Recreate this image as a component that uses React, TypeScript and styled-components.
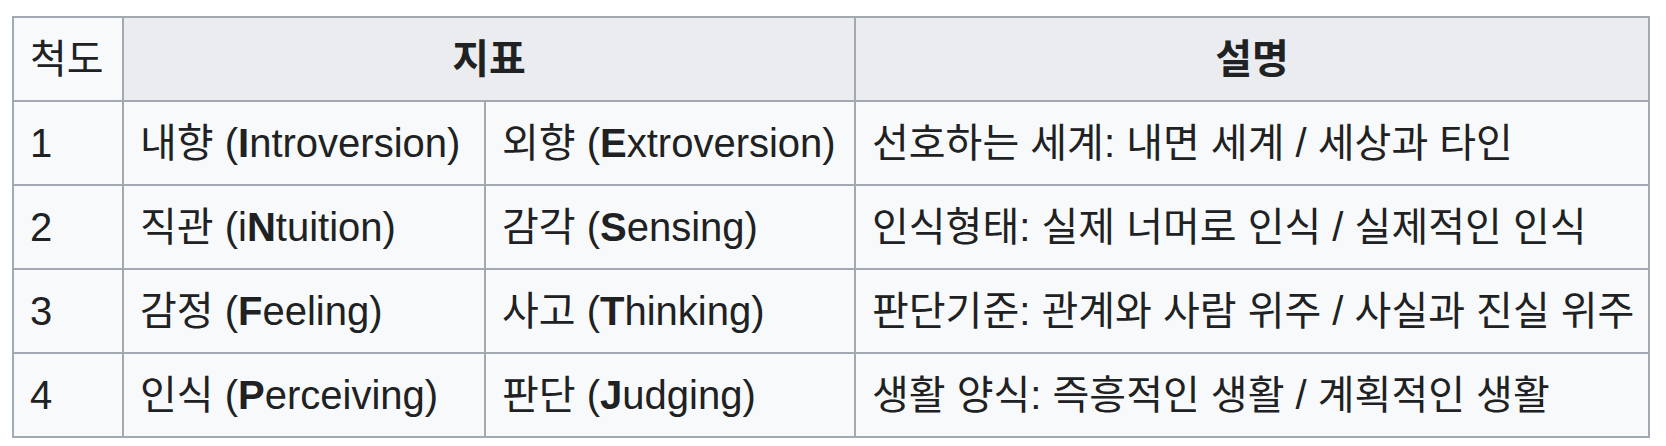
import React from "react";
import styled, { createGlobalStyle } from "styled-components";

const GlobalStyle = createGlobalStyle`
  html, body {
    margin: 0;
    padding: 0;
    background: #ffffff;
  }
  body {
    font-family: "Liberation Sans", "Noto Sans CJK KR", sans-serif;
    color: #202122;
  }
`;

const Page = styled.div`
  padding: 16px 12px;
`;

const Grid = styled.div`
  display: grid;
  grid-template-columns: 110px 362px 370px 794px;
  grid-auto-rows: 84px;
  width: max-content;
  border-left: 2px solid #a2a9b1;
  border-top: 2px solid #a2a9b1;
  font-size: 40px;
  line-height: 1.6;
`;

const Cell = styled.div<{ $head?: boolean; $span?: number }>`
  box-sizing: border-box;
  display: flex;
  align-items: center;
  justify-content: ${(p) => (p.$head ? "center" : "flex-start")};
  padding: 0 16px;
  border-right: 2px solid #a2a9b1;
  border-bottom: 2px solid #a2a9b1;
  background: ${(p) => (p.$head ? "#eaecf0" : "#f8f9fa")};
  font-weight: ${(p) => (p.$head ? 700 : 400)};
  grid-column: ${(p) => (p.$span ? `span ${p.$span}` : "auto")};
  white-space: nowrap;
  overflow: hidden;
`;

const Key = styled.b`
  font-weight: 700;
`;

type Row = {
  n: string;
  a: [string, string, string];
  b: [string, string, string];
  desc: string;
};

const rows: Row[] = [
  { n: "1", a: ["내향 (", "I", "ntroversion)"], b: ["외향 (", "E", "xtroversion)"], desc: "선호하는 세계: 내면 세계 / 세상과 타인" },
  { n: "2", a: ["직관 (i", "N", "tuition)"], b: ["감각 (", "S", "ensing)"], desc: "인식형태: 실제 너머로 인식 / 실제적인 인식" },
  { n: "3", a: ["감정 (", "F", "eeling)"], b: ["사고 (", "T", "hinking)"], desc: "판단기준: 관계와 사람 위주 / 사실과 진실 위주" },
  { n: "4", a: ["인식 (", "P", "erceiving)"], b: ["판단 (", "J", "udging)"], desc: "생활 양식: 즉흥적인 생활 / 계획적인 생활" },
];

const Indicator = ({ parts }: { parts: [string, string, string] }) => (
  <Cell>
    <span>
      {parts[0]}
      <Key>{parts[1]}</Key>
      {parts[2]}
    </span>
  </Cell>
);

export default function App() {
  return (
    <Page>
      <GlobalStyle />
      <Grid>
        <Cell>척도</Cell>
        <Cell $head $span={2}>지표</Cell>
        <Cell $head>설명</Cell>
        {rows.map((r) => (
          <React.Fragment key={r.n}>
            <Cell>{r.n}</Cell>
            <Indicator parts={r.a} />
            <Indicator parts={r.b} />
            <Cell>{r.desc}</Cell>
          </React.Fragment>
        ))}
      </Grid>
    </Page>
  );
}
